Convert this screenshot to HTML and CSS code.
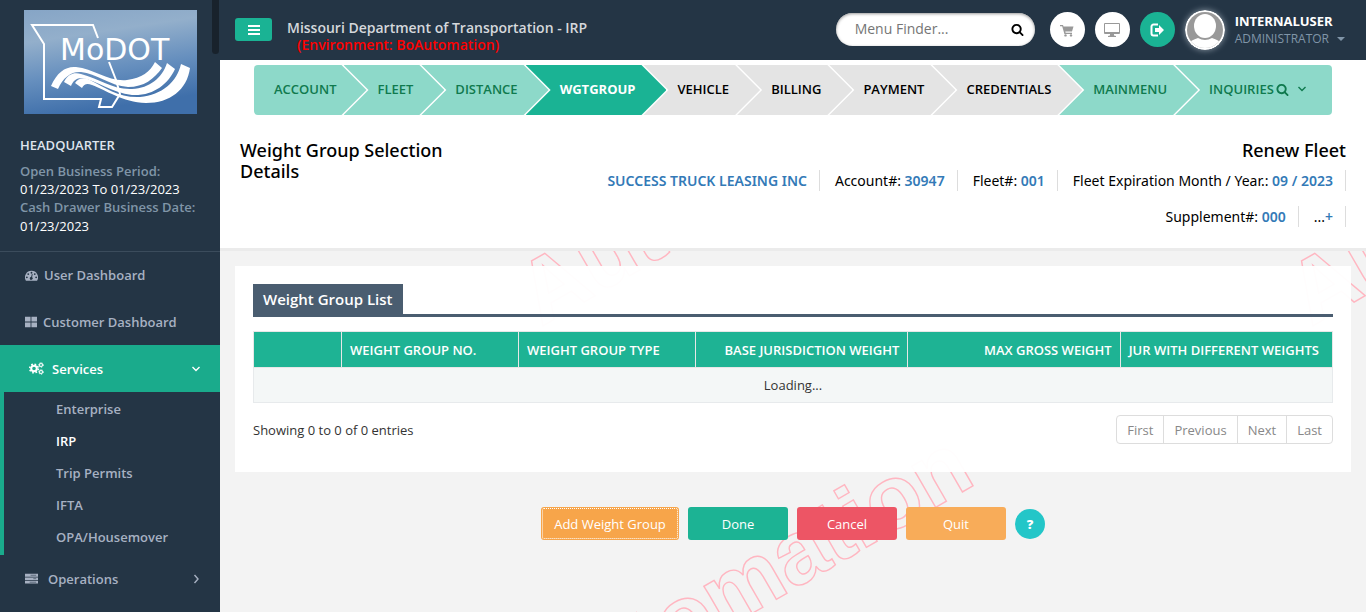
FILE: index.html
```html
<!DOCTYPE html>
<html lang="en">
<head>
<meta charset="utf-8">
<title>Weight Group Selection Details</title>
<link rel="stylesheet" href="styles.css">
</head>
<body>
<svg class="sprite" aria-hidden="true">
  <symbol id="search" viewBox="0 0 1792 1792"><path d="M1216 832q0-185-131.5-316.5t-316.5-131.5-316.5 131.5-131.5 316.5 131.5 316.5 316.5 131.5 316.5-131.5 131.5-316.5zm512 832q0 52-38 90t-90 38q-54 0-90-38l-343-342q-179 124-399 124-143 0-273.5-55.5t-225-150-150-225-55.5-273.5 55.5-273.5 150-225 225-150 273.5-55.5 273.5 55.5 225 150 150 225 55.5 273.5q0 220-124 399l343 343q37 37 37 90z"/></symbol>
</svg>
<div class="layout">
  <aside class="sidebar">
    <span class="scroll-thumb"></span>
    <svg class="logo" viewBox="0 0 173 104" role="img" aria-label="MoDOT">
      <defs><linearGradient id="sky" x1="0" y1="0" x2="0.25" y2="1"><stop offset="0" stop-color="#86a5c6"/><stop offset=".3" stop-color="#93afcb"/><stop offset=".65" stop-color="#668fbe"/><stop offset="1" stop-color="#3f6faa"/></linearGradient></defs>
      <rect width="173" height="104" fill="url(#sky)"/>
      <path d="M74 28L69 15H8L20 34V89H77L75 97H88L96 84 92 70 85 52" fill="none" stroke="#fff" stroke-width="2"/>
      <g fill="#fff">
        <path d="M27 76C33 62 42 56 52 57C70 59 85 72 103 70C118 68 126 62 131 52L138 58C130 69 120 77 104 77C86 76 72 63 57 62C48 61 39 67 34 79Z"/>
        <path d="M40 72C44 64 50 62 57 64C75 69 90 80 108 79C126 78 138 68 143 53L151 59C144 74 130 86 108 85C88 83 72 70 58 68C52 68 49 71 47 76Z"/>
        <path d="M51 73C54 68 60 67 66 70C82 78 95 88 116 87C138 85 153 72 157 54L166 58C163 80 146 93 122 93C98 92 82 80 68 75C63 73 60 74 58 78Z"/>
        <text class="logo-text" x="36" y="50">MoDOT</text>
      </g>
    </svg>
    <div class="office">
      <strong class="office-name">HEADQUARTER</strong>
      <span class="office-label">Open Business Period:</span>
      <span class="office-value">01/23/2023 To 01/23/2023</span>
      <span class="office-label">Cash Drawer Business Date:</span>
      <span class="office-value">01/23/2023</span>
    </div>
    <nav class="menu">
      <a href="#" class="menu-link first"><svg class="menu-icon" viewBox="0 0 14 14"><path fill="currentColor" fill-rule="evenodd" d="M7 2a7 7 0 0 1 6 10.700H1A7 7 0 0 1 7 2zM2 8a1 1 0 1 0 0 2 1 1 0 0 0 0-2zM3.500 4.500a1 1 0 1 0 0 2 1 1 0 0 0 0-2zM7 3a1 1 0 1 0 0 2 1 1 0 0 0 0-2zM10.500 4.500a1 1 0 1 0 0 2 1 1 0 0 0 0-2zM12 8a1 1 0 1 0 0 2 1 1 0 0 0 0-2zM7.400 5.500L6.600 8.700a1.500 1.500 0 1 0 1 .3l.7-3.300z"/></svg>User Dashboard</a>
      <a href="#" class="menu-link"><svg class="menu-icon tiles" viewBox="0 0 14 14"><path fill="currentColor" d="M0 1h6.500v5.500H0zM7.500 1H14v5.500H7.500zM0 7.500h6.500V13H0zM7.500 7.500H14V13H7.500z"/></svg>Customer Dashboard</a>
      <a href="#" class="menu-link active"><svg class="menu-icon cogs" viewBox="0 0 15 14"><g fill="none" stroke="currentColor"><circle cx="5" cy="7" r="2.800" stroke-width="2"/><circle cx="5" cy="7" r="4.300" stroke-width="1.600" stroke-dasharray="1.690"/><circle cx="12" cy="3.500" r="1.500" stroke-width="1.100"/><circle cx="12" cy="3.500" r="2.300" stroke-width="1" stroke-dasharray="1.030"/><circle cx="12" cy="10.500" r="1.500" stroke-width="1.100"/><circle cx="12" cy="10.500" r="2.300" stroke-width="1" stroke-dasharray="1.030"/></g></svg>Services<svg class="chevron" viewBox="0 0 10 10"><path d="M1.500 3L5 6.500 8.500 3"/></svg></a>
      <div class="submenu">
        <a href="#">Enterprise</a><a href="#" class="current">IRP</a><a href="#">Trip Permits</a><a href="#">IFTA</a><a href="#">OPA/Housemover</a>
      </div>
      <a href="#" class="menu-link"><svg class="menu-icon server" viewBox="0 0 14 14"><path fill="currentColor" d="M0 2h14v3H0zM0 6h14v2.500H0zM0 9.500h14v3H0z"/><path stroke="#243545" d="M6 3.500h6M9 7.200h3M5 11h7" opacity=".6"/></svg>Operations<svg class="chevron" viewBox="0 0 10 10"><path d="M3.500 1L7 5 3.500 9"/></svg></a>
    </nav>
  </aside>
  <div class="main">
    <header class="topbar">
      <button class="toggle" aria-label="Toggle menu"><svg viewBox="0 0 12 10"><path d="M0 1h12M0 5h12M0 9h12" stroke="#fff" stroke-width="2"/></svg></button>
      <div class="brand"><span>Missouri Department of Transportation - IRP</span><span class="environment">(Environment: BoAutomation)</span></div>
      <div class="finder"><input type="text" placeholder="Menu Finder..." aria-label="Menu Finder"><svg class="finder-icon"><use href="#search"/></svg></div>
      <button class="round" aria-label="Cart"><svg viewBox="0 0 16 16"><path fill="#999" d="M1 3h3l.5 1.500H14.500L13 9.500H6.300l.3 1.300H13V12H5.400L3.200 4.300H1z"/><circle cx="6.500" cy="13.400" r="1.200" fill="#999"/><circle cx="12" cy="13.400" r="1.200" fill="#999"/></svg></button>
      <button class="round" aria-label="Screen"><svg viewBox="0 0 16 16"><path fill="#999" fill-rule="evenodd" d="M1 1h14q1 0 1 1v9q0 1-1 1H10v1.500l2 .5v1H4v-1l2-.5V12H1q-1 0-1-1V2q0-1 1-1zM1 2v8h14V2z"/></svg></button>
      <button class="round exit" aria-label="Log out"><svg viewBox="0 0 16 16"><path d="M9 2.500H4.500a2 2 0 0 0-2 2v7a2 2 0 0 0 2 2H9" fill="none" stroke="#fff" stroke-width="2"/><path fill="#fff" d="M6 6h4V3l5 5-5 5v-3H6z"/></svg></button>
      <a href="#" class="user">
        <svg class="avatar" viewBox="0 0 40 40"><clipPath id="face"><circle cx="20" cy="20" r="18"/></clipPath><circle cx="20" cy="20" r="20" fill="#fff"/><g clip-path="url(#face)"><path fill="#999" d="M0 0h40v40H0z"/><ellipse cx="20" cy="16" rx="11" ry="12" fill="#fff"/><path fill="#fff" d="M3 34Q6 30 13 28Q20 32 27 28Q34 30 37 34V40H3z"/></g></svg>
        <span class="user-text"><strong>INTERNALUSER</strong><span class="role">ADMINISTRATOR<i class="caret"></i></span></span>
      </a>
    </header>
    <section class="intro">
      <nav class="steps">
        <a href="#" class="step linked">ACCOUNT</a><a href="#" class="step linked">FLEET</a><a href="#" class="step linked">DISTANCE</a><a href="#" class="step now">WGTGROUP</a><a href="#" class="step">VEHICLE</a><a href="#" class="step">BILLING</a><a href="#" class="step">PAYMENT</a><a href="#" class="step">CREDENTIALS</a><a href="#" class="step linked">MAINMENU</a><a href="#" class="step linked last">INQUIRIES<svg class="step-search"><use href="#search"/></svg><svg class="step-chevron" viewBox="0 0 10 10"><path d="M1.500 3L5 6.500 8.500 3"/></svg></a>
      </nav>
      <div class="heading">
        <h1>Weight Group Selection Details</h1>
        <div class="summary">
          <h2>Renew Fleet</h2>
          <ul class="facts">
            <li><b>SUCCESS TRUCK LEASING INC</b></li>
            <li>Account#: <b>30947</b></li>
            <li>Fleet#: <b>001</b></li>
            <li>Fleet Expiration Month / Year.: <b>09 / 2023</b></li>
            <li>Supplement#: <b>000</b></li>
            <li>...<a href="#" aria-label="More details">+</a></li>
          </ul>
        </div>
      </div>
    </section>
    <main class="content">
      <svg class="watermark" aria-hidden="true"><g class="watermark-text"><text transform="translate(321 76) rotate(-30)">Automation</text><text transform="translate(1091 76) rotate(-30)">Automation</text><text transform="translate(325 482) rotate(-30)">Automation</text></g></svg>
      <section class="panel">
        <div class="panel-head"><h3>Weight Group List</h3></div>
        <table class="grid">
          <colgroup><col class="c1"><col class="c2"><col class="c2"><col class="c3"><col class="c3"><col class="c3"></colgroup>
          <thead><tr><th aria-label="Actions"></th><th>WEIGHT GROUP NO.</th><th>WEIGHT GROUP TYPE</th><th class="num">BASE JURISDICTION WEIGHT</th><th class="num">MAX GROSS WEIGHT</th><th>JUR WITH DIFFERENT WEIGHTS</th></tr></thead>
          <tbody><tr><td colspan="6">Loading...</td></tr></tbody>
        </table>
        <div class="grid-foot">
          <span>Showing 0 to 0 of 0 entries</span>
          <div class="pager"><button>First</button><button>Previous</button><button>Next</button><button>Last</button></div>
        </div>
      </section>
      <div class="actions">
        <button class="btn add">Add Weight Group</button>
        <button class="btn done">Done</button>
        <button class="btn cancel">Cancel</button>
        <button class="btn quit">Quit</button>
        <button class="help" aria-label="Help">?</button>
      </div>
    </main>
  </div>
</div>
</body>
</html>
```
FILE: styles.css
```css
* { box-sizing: border-box; }
body { margin: 0; font: 13px/18px "Open Sans", "Noto Sans", sans-serif; color: #000; background: #f3f3f3; overflow: hidden; }
a { text-decoration: none; color: inherit; }
button, input { font: inherit; }
button { border: 0; padding: 0; cursor: pointer; }
h1, h2, h3, ul { margin: 0; padding: 0; }
.sprite { position: absolute; width: 0; height: 0; }
.layout { display: flex; min-height: 100vh; }
.sidebar { position: relative; width: 220px; flex: none; background: #243545; color: #a7b1c2; }
.scroll-thumb { position: absolute; top: 0; right: 1px; width: 7px; height: 54px; border-radius: 0 0 4px 4px; background: #18222c; }
.logo { display: block; width: 173px; height: 104px; margin: 10px 0 0 24px; }
.logo-text { font: 30px "DejaVu Sans", sans-serif; }
.office { display: flex; flex-direction: column; padding: 22px 20px 16px; line-height: 19px; }
.office-name { color: #dfe4ed; font-weight: 600; line-height: 18px; margin-bottom: 8px; }
.office-label { color: #8095a8; font-weight: 600; }
.office-value { color: #fff; line-height: 17px; font-weight: 500; }
.office-value:last-child { line-height: 18px; }
.menu { font-weight: 600; }
.menu-link { display: flex; align-items: center; height: 47px; padding: 0 19px 0 25px; }
.menu-link.first { border-top: 1px solid #3b4c5c; }
.menu-icon { width: 13px; height: 13px; margin-right: 6px; }
.menu-icon.tiles { width: 12px; height: 12px; }
.menu-icon.cogs { width: 15px; height: 15px; margin: 0 8px 0 4px; }
.menu-icon.server { margin-right: 10px; }
.menu-link.active { background: #1aab8c; color: #fff; }
.chevron { width: 10px; height: 10px; margin-left: auto; }
.chevron path, .step-chevron path { fill: none; stroke: currentColor; stroke-width: 1.4; }
.submenu { border-left: 4px solid #1aab8c; padding: 1px 0 2px; }
.submenu a { display: block; line-height: 32px; padding-left: 52px; }
.submenu .current { color: #fff; }
.main { flex: 1; min-width: 0; display: flex; flex-direction: column; }
.topbar { display: flex; align-items: center; height: 60px; padding: 0 21px 1px 15px; background: #243545; }
.toggle { width: 37px; height: 23px; border-radius: 3px; background: #1ab394; }
.toggle svg { width: 12px; height: 10px; }
.brand { margin: 13px auto 0 15px; display: flex; flex-direction: column; font-size: 14px; line-height: 17px; font-weight: 600; color: #d5d8dc; }
.environment { color: #f00; padding-left: 10px; }
.finder { position: relative; width: 199px; margin-right: 15px; }
.finder input { width: 100%; height: 33px; border: 0; border-radius: 17px; padding: 0 40px 2px 19px; font-size: 14px; background: #fff; box-shadow: inset 0 1px 3px #999; }
.finder input::placeholder { color: #757575; }
.finder-icon { position: absolute; right: 11px; top: 10px; width: 13px; height: 13px; }
.round { width: 35px; height: 35px; border-radius: 50%; background: #fff; margin-right: 10px; display: grid; place-items: center; }
.round svg { width: 16px; height: 16px; }
.round.exit { background: #1ab394; }
.user { display: flex; align-items: center; gap: 10px; }
.avatar { width: 40px; height: 40px; border-radius: 50%; box-shadow: 0 0 6px #8d99a5; }
.user-text { display: flex; flex-direction: column; color: #fff; }
.user-text strong { font-weight: 700; }
.role { font-size: 12px; color: #8095a8; display: flex; align-items: center; gap: 8px; }
.caret { border: 4px solid transparent; border-top-color: #8095a8; border-bottom: 0; }
.intro { background: #fff; padding: 5px 20px 0; min-height: 191px; border-bottom: 3px solid #ebebeb; }
.steps { display: flex; margin: 0 14px; border-radius: 4px; overflow: hidden; }
.step { display: flex; align-items: center; height: 50px; padding: 0 31px 2px 34px; margin-left: -23px; background: #e4e4e4; font-weight: 600; clip-path: polygon(0 0, calc(100% - 25px) 0, 100% 50%, calc(100% - 25px) 100%, 0 100%, 25px 50%); }
.step:first-child { margin-left: 0; padding: 0 30px 2px 20px; clip-path: polygon(0 0, calc(100% - 25px) 0, 100% 50%, calc(100% - 25px) 100%, 0 100%); }
.step.linked { background: #8dd9c9; color: #107a4e; }
.step.now { background: #1ab394; color: #fff; font-weight: 700; }
.step.last { flex: 1; padding-right: 20px; clip-path: polygon(0 0, 100% 0, 100% 100%, 0 100%, 25px 50%); }
.step-search { width: 13px; height: 13px; margin: 0 8px 0 2px; fill: currentColor; }
.step-chevron { width: 10px; height: 10px; }
.heading { display: flex; justify-content: space-between; padding-top: 25px; }
h1, h2 { font-size: 18px; line-height: 21px; font-weight: 500; font-family: "Noto Sans", sans-serif; }
h1 { width: 220px; }
.summary { width: 775px; text-align: right; }
.facts { list-style: none; display: flex; flex-wrap: wrap; justify-content: flex-end; font-family: "Noto Sans", sans-serif; font-size: 14px; line-height: 21px; padding-top: 9px; row-gap: 15px; }
.facts li { padding: 0 12px 0 15px; border-right: 1px solid #ddd; }
.facts b, .facts a { color: #337ab7; font-weight: 600; }
.content { position: relative; flex: 1; padding: 15px; }
.watermark { position: absolute; left: 0; top: 0; width: 100%; height: 100%; }
.watermark-text { font: bold 90px "Liberation Sans", sans-serif; fill: none; stroke: #ffb6c1; stroke-width: 1.4; }
.panel { position: relative; background: rgba(255, 255, 255, .97); padding: 18px 18px 28px; }
.panel-head { display: flex; border-bottom: 3px solid #4a5d70; margin-bottom: 14px; }
h3 { background: #4a5d70; color: #fff; font-size: 15px; line-height: 30px; font-weight: 600; padding: 0 10px; }
.grid { width: 100%; table-layout: fixed; border-collapse: collapse; color: #333; }
.c1 { width: 88px; }
.c2 { width: 177px; }
.grid th { height: 36px; padding: 0 8px; background: #1eb394; color: #fff; border: 1px solid #e7e7e7; font-size: 13px; font-weight: 600; text-align: left; white-space: nowrap; }
.grid th.num { text-align: right; }
.grid td { height: 35px; padding: 0; text-align: center; background: #f4f7f7; border: 1px solid #e7eaec; }
.grid-foot { display: flex; justify-content: space-between; align-items: center; margin-top: 12px; color: #333; }
.pager { display: flex; border: 1px solid #ddd; border-radius: 4px; }
.pager button { height: 27px; padding: 0 10px; color: #888; background: none; border-right: 1px solid #ddd; }
.pager button:last-child { border-right: 0; }
.actions { position: relative; display: flex; justify-content: center; align-items: center; gap: 9px; margin-top: 35px; }
.btn { width: 100px; height: 33px; border-radius: 3px; color: #fff; }
.add { width: 138px; background: #f7a54a; outline: 1px dotted #fff; outline-offset: -2px; }
.done { background: #1cb394; }
.cancel { background: #ed5565; }
.quit { background: #f8ac59; }
.help { width: 30px; height: 30px; border-radius: 50%; background: #23c6c8; color: #fff; font-weight: 800; }
```
